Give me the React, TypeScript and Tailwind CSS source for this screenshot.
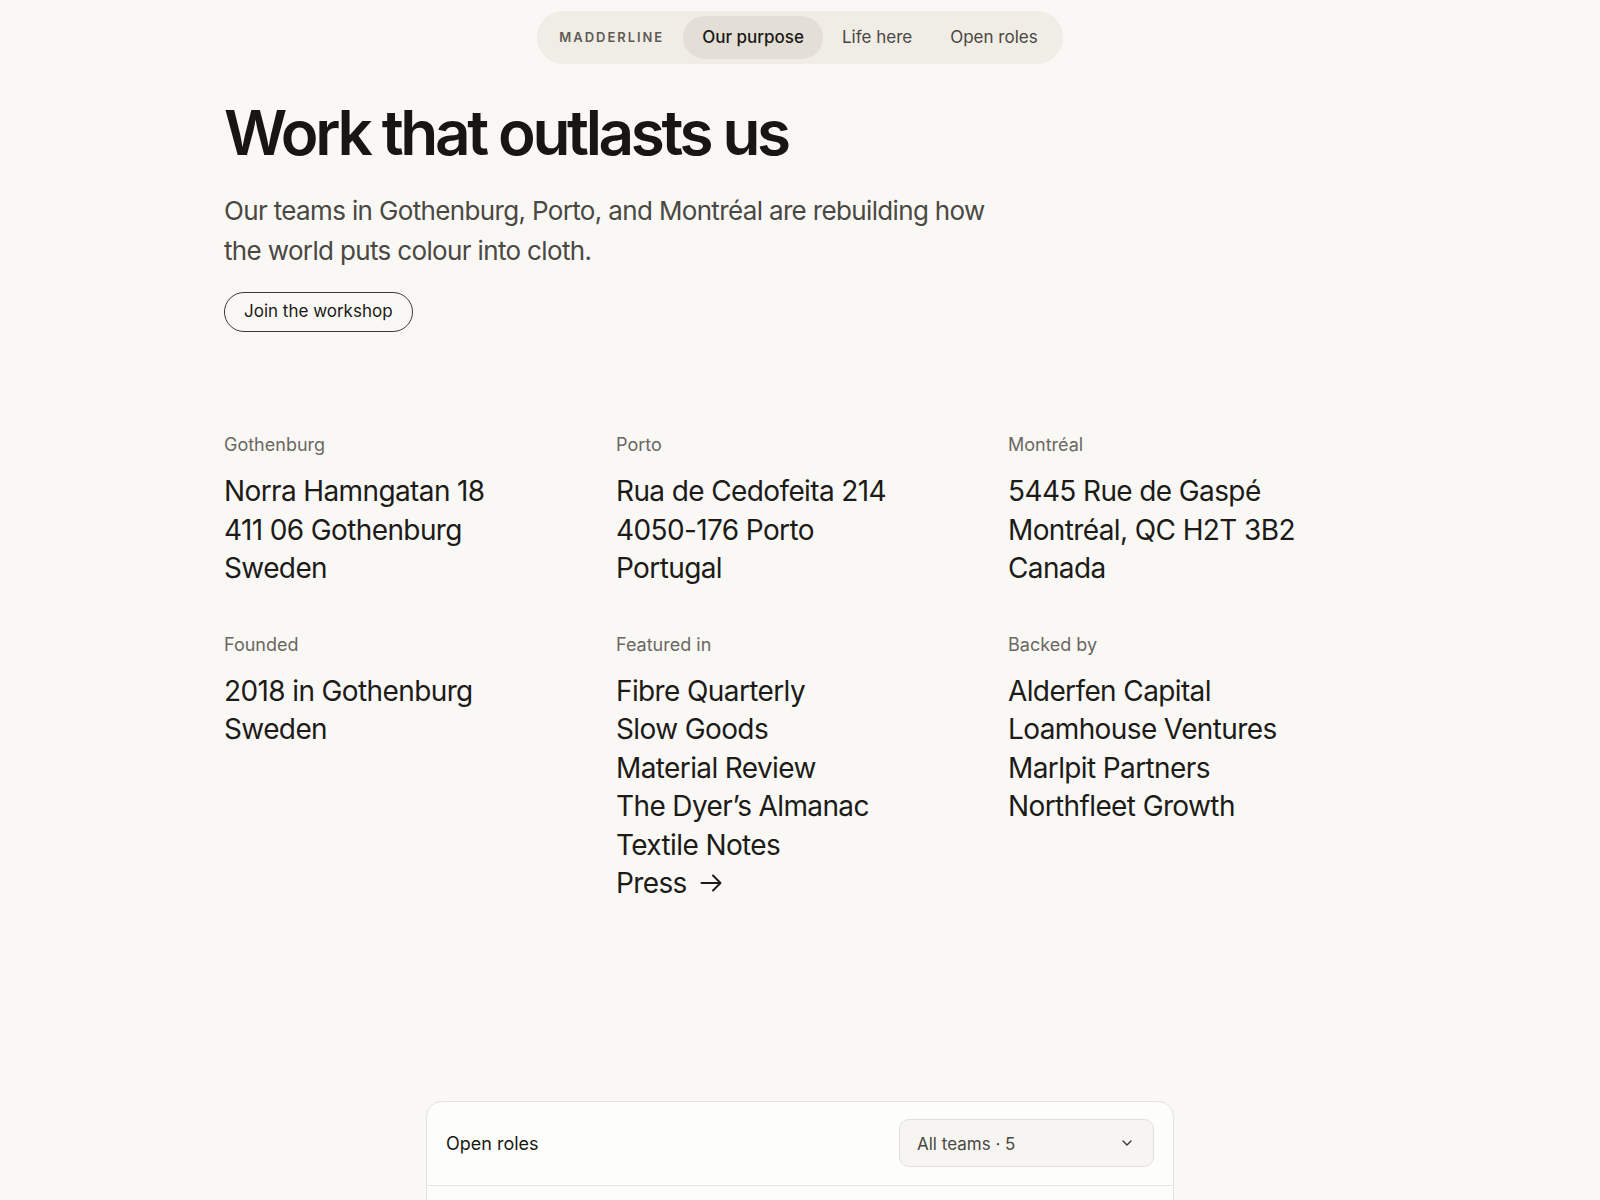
import React from 'react';
import { ChevronDown } from 'lucide-react';

const navItems = ['Our purpose', 'Life here', 'Open roles'];

const facts = [
  { label: 'Gothenburg', lines: ['Norra Hamngatan 18', '411 06 Gothenburg', 'Sweden'] },
  { label: 'Porto', lines: ['Rua de Cedofeita 214', '4050-176 Porto', 'Portugal'] },
  { label: 'Montréal', lines: ['5445 Rue de Gaspé', 'Montréal, QC H2T 3B2', 'Canada'] },
  { label: 'Founded', lines: ['2018 in Gothenburg', 'Sweden'] },
  {
    label: 'Featured in',
    lines: ['Fibre Quarterly', 'Slow Goods', 'Material Review', 'The Dyer’s Almanac', 'Textile Notes'],
    press: true,
  },
  { label: 'Backed by', lines: ['Alderfen Capital', 'Loamhouse Ventures', 'Marlpit Partners', 'Northfleet Growth'] },
];

const Arrow = () => (
  <svg width="22" height="18" viewBox="0 0 22 18" fill="none" stroke="currentColor" strokeWidth="2" strokeLinecap="round" strokeLinejoin="round">
    <path d="M1.5 9H20.5M13 1.5L20.5 9L13 16.5" />
  </svg>
);

const App: React.FC = () => {
  return (
    <div className="min-h-screen bg-[#f9f8f5] text-[#1a1916] font-['Inter','Noto_Sans',sans-serif] pb-24">
      {/* top nav */}
      <div className="flex justify-center pt-[11px]">
        <nav className="flex items-center h-[53px] rounded-full bg-[#f0ede6] pl-[22px] pr-[6px]">
          <span className="text-[13px] font-semibold tracking-[0.15em] text-[#5f5b54] mr-[19px]">MADDERLINE</span>
          {navItems.map((item, i) => (
            <a
              key={item}
              href="#"
              className={`h-[43px] flex items-center px-[19px] rounded-full text-[17px] ${
                i === 0 ? 'bg-[#e4dfd6] text-[#1a1916] font-medium' : 'text-[#4a4741]'
              }`}
            >
              {item}
            </a>
          ))}
        </nav>
      </div>

      <main className="max-w-6xl mx-auto">
        <section className="pt-[38px]">
          <h1 className="text-[62px] leading-none font-semibold tracking-[-0.054em] text-[#171612]">
            Work that outlasts us
          </h1>
          <p className="mt-[27px] max-w-[790px] text-[26px] leading-[40px] tracking-[-0.025em] text-[#4a4843]">
            Our teams in Gothenburg, Porto, and Montréal are rebuilding how the world puts colour into cloth.
          </p>
          <button className="mt-[21px] h-[40px] px-[19px] rounded-full border-[1.5px] border-[#3a3834] text-[17px] text-[#1a1916]">
            Join the workshop
          </button>
        </section>

        <section className="mt-[101px] grid grid-cols-3 gap-x-6 gap-y-[45px]">
          {facts.map((f) => (
            <div key={f.label}>
              <div className="text-[18px] leading-6 text-[#6b6761]">{f.label}</div>
              <div className="mt-[15px] text-[28px] leading-[38.5px] tracking-[-0.022em] text-[#1c1b18]">
                {f.lines.map((l) => (
                  <div key={l}>{l}</div>
                ))}
                {f.press && (
                  <a href="#" className="flex items-center gap-[13px]">
                    Press <Arrow />
                  </a>
                )}
              </div>
            </div>
          ))}
        </section>
      </main>

      {/* open roles card */}
      <section className="mt-[198px] w-[748px] mx-auto rounded-2xl border border-[#e6e3dd] bg-[#fdfdfb]">
        <div className="h-[84px] flex items-center justify-between pl-[19px] pr-[19px] border-b border-[#e8e5df]">
          <h2 className="text-[18px] text-[#1a1916]">Open roles</h2>
          <button className="w-[255px] h-[48px] flex items-center justify-between pl-[17px] pr-[18px] rounded-[10px] border border-[#e2dfd8] bg-[#f6f5f1] text-[17px] text-[#4a4843]">
            <span className="pt-[3px]">All teams · 5</span>
            <ChevronDown className="w-[16px] h-[16px] text-[#3a3834]" />
          </button>
        </div>
        <div className="h-[200px]" />
      </section>
    </div>
  );
};

export default App;
